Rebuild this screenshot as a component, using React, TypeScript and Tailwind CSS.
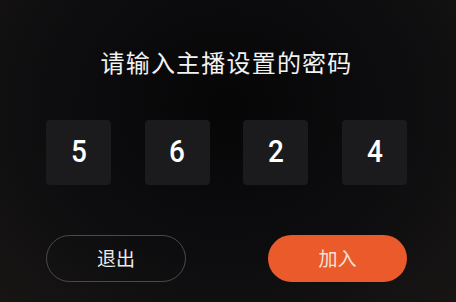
import React from 'react';

const digits = ['5', '6', '2', '4'];

const App = () => {
  return (
    <div className="h-[302px] w-[456px] overflow-hidden bg-[radial-gradient(ellipse_at_50%_35%,#060607_0%,#0d0d0f_55%,#181514_100%)] font-['Noto_Sans_CJK_SC',sans-serif] text-white">
      <div className="ml-[46px] w-[361px] pt-[45px]">
        <h1 className="text-center text-[24px] leading-[34px] tracking-[1.2px] text-[#f2f2f2]">
          请输入主播设置的密码
        </h1>
        <div className="mt-[41px] flex justify-between">
          {digits.map((d, i) => (
            <div
              key={i}
              className="flex h-[65px] w-[65px] items-center justify-center rounded-[4px] bg-[#1b1b1d] font-['Roboto',sans-serif] text-[31px] font-medium text-white"
            >
              <span className="inline-block scale-x-90">{d}</span>
            </div>
          ))}
        </div>
        <div className="mt-[50px] flex justify-between">
          <button className="h-[47px] w-[140px] rounded-full border border-[#4a4a4a] text-[19px] text-[#ececec]">
            退出
          </button>
          <button className="h-[47px] w-[139px] rounded-full bg-[#eb5a2b] text-[19px] text-[#f6e2d9]">
            加入
          </button>
        </div>
      </div>
    </div>
  );
};

export default App;
